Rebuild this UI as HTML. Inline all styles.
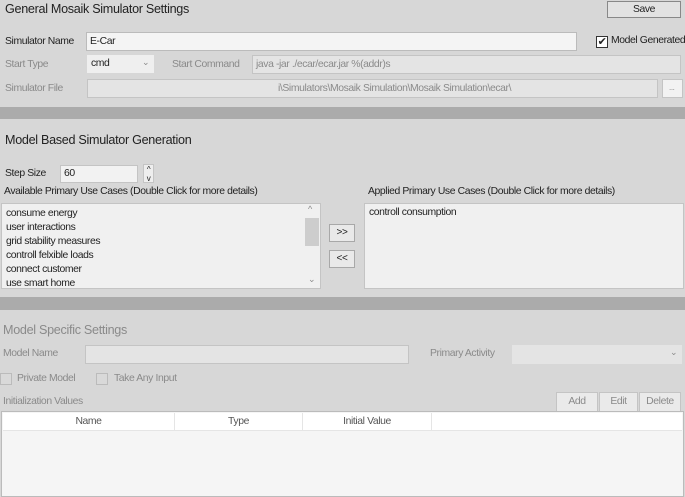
<!DOCTYPE html>
<html><head><style>
*{box-sizing:border-box;margin:0;padding:0}
body{width:685px;height:497px;background:#d7d7d7;font-family:"Liberation Sans",sans-serif;font-size:10.4px;color:#222;position:relative;overflow:hidden;letter-spacing:-0.4px}
.a{position:absolute;white-space:nowrap}
.g{color:#8a8a8a}
.in{position:absolute;border:1px solid #c4c4c4;background:#ececec}
.btn{position:absolute;border:1px solid #a8a8a8;background:#e9e9e9;text-align:center;line-height:16px}
.bar{position:absolute;left:0;width:685px;background:#ababab}
h1{position:absolute;font-weight:normal;font-size:12.6px;color:#222;letter-spacing:-0.3px}
.cb{position:absolute;width:12px;height:12px;border:1px solid #bbb;background:#d9d9d9}
</style></head><body>
<h1 style="left:5px;top:2px">General Mosaik Simulator Settings</h1>
<div class="btn" style="left:607px;top:1px;width:74px;height:17px;background:#e2e2e2;border-color:#888">Save</div>

<div class="a" style="left:5px;top:36px">Simulator Name</div>
<div class="in" style="left:86px;top:32px;width:491px;height:19px;background:#f4f4f4;border-color:#bbb"><span class="a" style="left:3px;top:3px">E-Car</span></div>
<div class="cb" style="left:596px;top:36px;background:#fff;border-color:#333;font-size:11px;line-height:10px;text-align:center">✔</div>
<div class="a" style="left:611px;top:35px">Model Generated</div>

<div class="a g" style="left:5px;top:59px">Start Type</div>
<div class="in" style="left:87px;top:55px;width:67px;height:18px;background:#efefef;border:none"><span class="a" style="left:4px;top:3px">cmd</span><span class="a g" style="left:55px;top:2px;font-size:9px">⌄</span></div>
<div class="a g" style="left:172px;top:59px">Start Command</div>
<div class="in" style="left:252px;top:55px;width:429px;height:19px;background:#e4e4e4"><span class="a g" style="left:3px;top:3px">java -jar ./ecar/ecar.jar %(addr)s</span></div>

<div class="a g" style="left:5px;top:83px">Simulator File</div>
<div class="in" style="left:87px;top:79px;width:571px;height:19px;background:#e4e4e4"><span class="a g" style="left:190px;top:3px">i\Simulators\Mosaik Simulation\Mosaik Simulation\ecar\</span></div>
<div class="in" style="left:662px;top:79px;width:21px;height:19px;background:#f2f2f2"><span class="a g" style="left:6px;top:3px;font-size:8px">...</span></div>

<div class="bar" style="top:107px;height:12px"></div>

<h1 style="left:5px;top:133px">Model Based Simulator Generation</h1>
<div class="a" style="left:5px;top:168px">Step Size</div>
<div class="in" style="left:60px;top:165px;width:78px;height:18px;background:#f2f2f2"><span class="a" style="left:3px;top:2px">60</span></div>
<div class="in" style="left:143px;top:164px;width:11px;height:19px;background:#eee;font-size:8px;text-align:center;line-height:9px">^<br>v</div>
<div class="a" style="left:4px;top:186px">Available Primary Use Cases (Double Click for more details)</div>
<div class="in" style="left:1px;top:203px;width:320px;height:86px;background:#f0f0f0">
<div class="a" style="left:4px;top:3px;line-height:14px">consume energy<br>user interactions<br>grid stability measures<br>controll felxible loads<br>connect customer<br>use smart home</div>
<div class="a" style="left:303px;top:14px;width:14px;height:28px;background:#cdcdcd"></div>
<span class="a g" style="left:306px;top:0px;font-size:9px">^</span>
<span class="a g" style="left:306px;top:70px;font-size:9px">⌄</span>
</div>
<div class="btn" style="left:329px;top:224px;width:26px;height:18px;font-size:10px">&gt;&gt;</div>
<div class="btn" style="left:329px;top:250px;width:26px;height:18px;font-size:10px">&lt;&lt;</div>
<div class="a" style="left:368px;top:186px">Applied Primary Use Cases (Double Click for more details)</div>
<div class="in" style="left:364px;top:203px;width:320px;height:86px;background:#f0f0f0"><span class="a" style="left:4px;top:3px">controll consumption</span></div>

<div class="bar" style="top:297px;height:13px"></div>

<h1 style="left:3px;top:323px;color:#8a8a8a">Model Specific Settings</h1>
<div class="a g" style="left:3px;top:348px">Model Name</div>
<div class="in" style="left:85px;top:345px;width:324px;height:19px;background:#e4e4e4"></div>
<div class="a g" style="left:430px;top:348px">Primary Activity</div>
<div class="in" style="left:512px;top:345px;width:170px;height:19px;background:#e4e4e4;border:none"><span class="a g" style="left:158px;top:2px;font-size:9px">⌄</span></div>
<div class="cb" style="left:0px;top:373px"></div>
<div class="a g" style="left:17px;top:373px">Private Model</div>
<div class="cb" style="left:96px;top:373px"></div>
<div class="a g" style="left:114px;top:373px">Take Any Input</div>
<div class="a g" style="left:3px;top:396px">Initialization Values</div>
<div class="btn g" style="left:556px;top:392px;width:42px;height:20px;line-height:18px;background:#eaeaea;border-color:#c4c4c4">Add</div>
<div class="btn g" style="left:599px;top:392px;width:39px;height:20px;line-height:18px;background:#eaeaea;border-color:#c4c4c4">Edit</div>
<div class="btn g" style="left:639px;top:392px;width:42px;height:20px;line-height:18px;background:#eaeaea;border-color:#c4c4c4">Delete</div>
<div class="in" style="left:1px;top:411px;width:683px;height:86px;background:#f5f5f5;border-color:#bbb">
<div class="a" style="left:1px;top:1px;width:679px;height:18px;background:#fff;border-bottom:1px solid #e5e5e5"></div>
<div class="a" style="left:1px;top:1px;width:172px;height:18px;border-right:1px solid #e5e5e5;text-align:center;line-height:17px;color:#555">Name</div>
<div class="a" style="left:173px;top:1px;width:128px;height:18px;border-right:1px solid #e5e5e5;text-align:center;line-height:17px;color:#555">Type</div>
<div class="a" style="left:301px;top:1px;width:129px;height:18px;border-right:1px solid #e5e5e5;text-align:center;line-height:17px;color:#555">Initial Value</div>
</div>
</body></html>
